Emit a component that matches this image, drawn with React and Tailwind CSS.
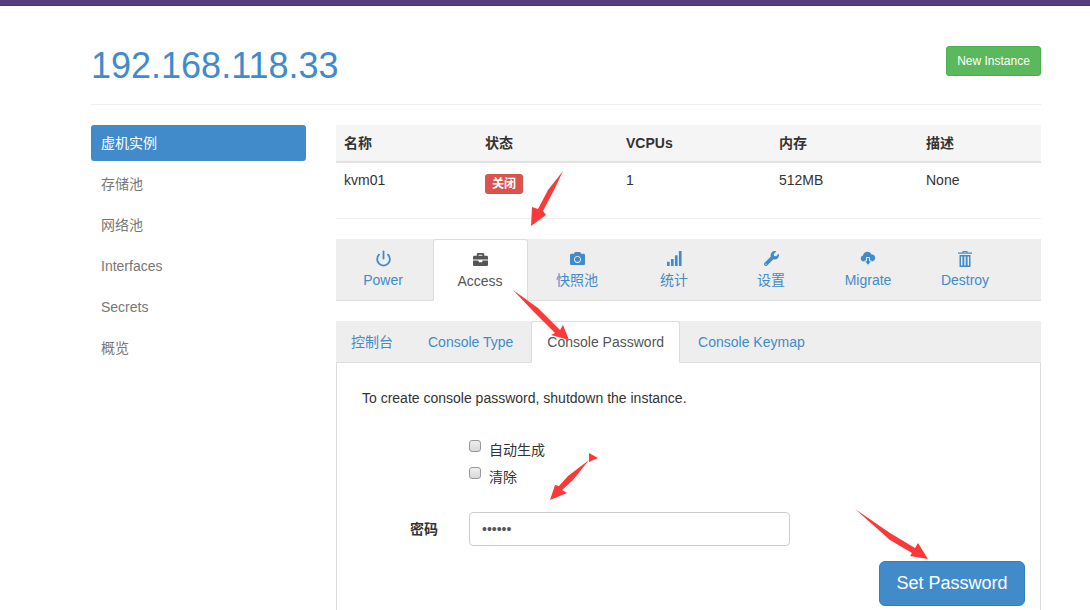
import { Power } from "lucide-react";
import { FaBriefcase, FaCamera, FaWrench } from "react-icons/fa";

const font = { fontFamily: '"Liberation Sans", "Noto Sans CJK SC", sans-serif' };

function SignalIcon() {
  return (
    <svg viewBox="0 0 14 14" width="15" height="15" fill="currentColor">
      <rect x="0" y="10" width="2.5" height="4" />
      <rect x="3.7" y="7.5" width="2.5" height="6.5" />
      <rect x="7.4" y="4" width="2.5" height="10" />
      <rect x="11.1" y="0" width="2.5" height="14" />
    </svg>
  );
}

function TrashIcon() {
  return (
    <svg viewBox="0 0 14 16" width="14" height="16" fill="currentColor">
      <path d="M4.5 0h5v1.5h4.5v1.3H0V1.5h4.5zM5.5 1v.5h3V1z" fillRule="evenodd" />
      <path d="M1.5 4h11v12h-11zM3 5.5v9h1.4v-9zM6.3 5.5v9h1.4v-9zM9.6 5.5v9H11v-9z" fillRule="evenodd" />
    </svg>
  );
}

function CloudIcon() {
  return (
    <svg viewBox="0 0 16 15" width="16" height="15" fill="currentColor">
      <path d="M3.5 10.5A3 3 0 0 1 3 4.6 4.5 4.5 0 0 1 11.6 3.6 3.5 3.5 0 0 1 12.5 10.5z" />
      <polygon points="6.5,6.5 9.5,6.5 9.5,10 11.5,10 8,14.5 4.5,10 6.5,10" stroke="#eee" strokeWidth="1" />
    </svg>
  );
}

const sideItems = ["虚机实例", "存储池", "网络池", "Interfaces", "Secrets", "概览"];

const mainTabs = [
  { label: "Power", icon: <Power size={17} strokeWidth={2.6} /> },
  { label: "Access", icon: <FaBriefcase size={15} />, active: true },
  { label: "快照池", icon: <FaCamera size={15} /> },
  { label: "统计", icon: <SignalIcon /> },
  { label: "设置", icon: <FaWrench size={15} /> },
  { label: "Migrate", icon: <CloudIcon /> },
  { label: "Destroy", icon: <TrashIcon /> },
];

const subTabs = ["控制台", "Console Type", "Console Password", "Console Keymap"];

function Arrows() {
  return (
    <svg className="absolute left-0 top-0 pointer-events-none" width="1090" height="610" fill="#f93a38">
      <polygon points="563,171 554,190 543,211 546,215 531,226 532,207 538,209 548,190" />
      <polygon points="513,290 538,308 560,330 563,325 569,340 551,335 555,333 533,311" />
      <polygon points="589,460 573,480 562,490 567,493 550,500 555,485 559,486 568,476" />
      <polygon points="589,453 598,458 589,462" />
      <polygon points="855,509 890,533 915,548 918,543 928,559 910,556 912,553 890,540" />
    </svg>
  );
}

export default function App() {
  return (
    <div className="relative h-[610px] overflow-hidden bg-white text-[14px] leading-[20px] text-[#333]" style={font}>
      <div className="h-[6px] bg-[#563d7c] border-b border-[#4a3470]" />

      <div className="ml-[91px] w-[950px]">
        <div className="flex justify-between h-[99px] border-b border-[#eee]">
          <h1 className="mt-[40px] text-[36px] leading-[40px] text-[#428bca]">192.168.118.33</h1>
          <button className="mt-[40px] h-[30px] w-[95px] rounded-[3px] border border-[#4cae4c] bg-[#5cb85c] text-[12px] text-white">
            New Instance
          </button>
        </div>

        <div className="flex mt-[20px]">
          <ul className="w-[215px] flex flex-col gap-[5px]">
            {sideItems.map((item, i) => (
              <li
                key={item}
                className={`h-[36px] px-[10px] flex items-center rounded-[3px] ${i === 0 ? "bg-[#428bca] text-white" : "text-[#777]"}`}
              >
                {item}
              </li>
            ))}
          </ul>

          <div className="ml-[30px] w-[705px] h-[485px] flex flex-col">
            <table className="table-fixed w-full border-b border-[#eee]">
              <thead>
                <tr className="h-[37px] bg-[#f5f5f5] border-b-2 border-[#e2e2e2] text-left">
                  <th className="w-[141px] px-[8px] font-bold">名称</th>
                  <th className="w-[141px] px-[8px] font-bold">状态</th>
                  <th className="w-[153px] px-[8px] font-bold">VCPUs</th>
                  <th className="w-[147px] px-[8px] font-bold">内存</th>
                  <th className="px-[8px] font-bold">描述</th>
                </tr>
              </thead>
              <tbody>
                <tr className="h-[56px] align-top">
                  <td className="px-[8px] pt-[7px]">kvm01</td>
                  <td className="px-[8px] pt-[10px]">
                    <span className="inline-flex h-[20px] w-[38px] items-center justify-center rounded-[3px] bg-[#d9534f] text-[12px] font-bold text-white">
                      关闭
                    </span>
                  </td>
                  <td className="px-[8px] pt-[7px]">1</td>
                  <td className="px-[8px] pt-[7px]">512MB</td>
                  <td className="px-[8px] pt-[7px]">None</td>
                </tr>
              </tbody>
            </table>

            <div className="mt-[20px] flex gap-[2px] h-[62px] bg-[#eee] border-b border-[#ddd]">
              {mainTabs.map(tab => (
                <div
                  key={tab.label}
                  className={`w-[95px] h-[62px] pr-[1px] flex flex-col items-center rounded-t-[3px] ${
                    tab.active ? "bg-white border border-[#ddd] border-b-white text-[#555]" : "text-[#428bca]"
                  }`}
                >
                  <span className="h-[18px] mt-[11px] flex items-center justify-center">{tab.icon}</span>
                  <span className="mt-[2px]">{tab.label}</span>
                </div>
              ))}
            </div>

            <div className="mt-[20px] flex h-[42px] bg-[#eee] border-b border-[#ddd]">
              {subTabs.map(tab => (
                <div
                  key={tab}
                  className={`h-[42px] pl-[15px] pr-[15px] first:pr-[16px] mr-[2px] first:border-l-0 border flex items-center rounded-t-[3px] ${
                    tab === "Console Password" ? "bg-white border-[#ddd] border-b-white text-[#555]" : "border-transparent text-[#428bca]"
                  }`}
                >
                  {tab}
                </div>
              ))}
            </div>

            <div className="flex-1 border-x border-[#ddd] pt-[25px] pl-[25px] pr-[15px]">
              <p>To create console password, shutdown the instance.</p>

              <div className="mt-[32px] ml-[107px] flex flex-col gap-[7px]">
                <label className="flex items-start gap-[8px] h-[20px]">
                  <input type="checkbox" className="appearance-none w-[12px] h-[12px] rounded-[3px] border border-[#999] bg-linear-to-b from-[#eee] to-[#d8d8d8]" />
                  自动生成
                </label>
                <label className="flex items-start gap-[8px] h-[20px]">
                  <input type="checkbox" className="appearance-none w-[12px] h-[12px] rounded-[3px] border border-[#999] bg-linear-to-b from-[#eee] to-[#d8d8d8]" />
                  清除
                </label>
              </div>

              <div className="mt-[25px] flex items-center">
                <label className="w-[76px] text-right font-bold">密码</label>
                <input
                  type="password"
                  readOnly
                  defaultValue="123456"
                  className="ml-[31px] w-[321px] h-[34px] px-[12px] rounded-[4px] border border-[#ccc] text-[#555] outline-none"
                />
              </div>

              <div className="mt-[15px] flex justify-end">
                <button className="w-[146px] h-[45px] rounded-[6px] border border-[#357ebd] bg-[#428bca] text-[18px] text-white">
                  Set Password
                </button>
              </div>
            </div>
          </div>
        </div>
      </div>

      <Arrows />
    </div>
  );
}
